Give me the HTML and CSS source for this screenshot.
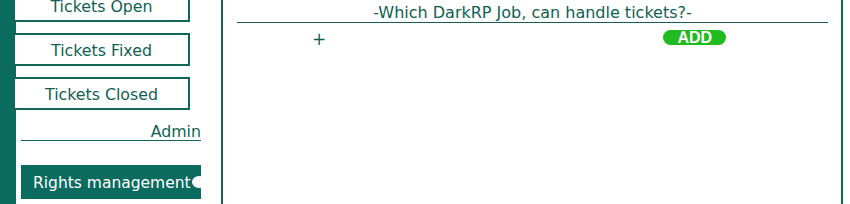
FILE: index.html
```html
<!DOCTYPE html>
<html>
<head>
<meta charset="utf-8">
<link rel="stylesheet" href="styles.css">
</head>
<body>
<div class="frame">
  <aside class="sidebar">
    <div class="nav-btn first">Tickets Open</div>
    <div class="nav-btn">Tickets Fixed</div>
    <div class="nav-btn">Tickets Closed</div>
    <div class="section-label">Admin</div>
    <div class="active-item">Rights management<span class="knob"></span></div>
  </aside>
  <main class="content">
    <div class="heading">-Which DarkRP Job, can handle tickets?-</div>
    <div class="add-row">
      <span class="plus">+</span>
      <span class="add-btn">ADD</span>
    </div>
  </main>
  <div class="edge"></div>
</div>
</body>
</html>
```

FILE: styles.css
```css
html, body {
  margin: 0;
  padding: 0;
  background: #ffffff;
}

.frame {
  display: flex;
  width: 850px;
  height: 204px;
  overflow: hidden;
  font-family: "DejaVu Sans", Verdana, sans-serif;
  color: #0f5f52;
}

.sidebar {
  width: 221px;
  flex: none;
  display: flex;
  flex-direction: column;
  background: linear-gradient(to right, #0b6b5f 16px, #ffffff 16px);
  border-right: 2px solid #0f6659;
}

.nav-btn {
  box-sizing: border-box;
  margin-left: 13px;
  width: 177px;
  height: 33px;
  margin-top: 11px;
  padding-top: 1px;
  background: #ffffff;
  border: 2px solid #0f6659;
  display: flex;
  align-items: center;
  justify-content: center;
  font-size: 15.8px;
  color: #0f5f52;
}

.nav-btn.first {
  margin-top: -11px;
}

.section-label {
  box-sizing: border-box;
  margin-left: 21px;
  width: 180px;
  margin-top: 12px;
  height: 19px;
  padding-top: 1px;
  border-bottom: 1px solid #0f6659;
  text-align: right;
  font-size: 15.8px;
  line-height: 18px;
  color: #0f5f52;
}

.active-item {
  position: relative;
  box-sizing: border-box;
  margin-left: 21px;
  width: 180px;
  margin-top: 24px;
  height: 34px;
  padding-top: 1px;
  background: #0b6b5f;
  color: #ffffff;
  font-size: 15.5px;
  display: flex;
  align-items: center;
  padding-left: 12px;
  overflow: hidden;
}

.knob {
  position: absolute;
  right: -5px;
  top: 11px;
  width: 14px;
  height: 12px;
  border-radius: 50%;
  background: #ffffff;
}

.content {
  width: 618px;
  flex: none;
  display: flex;
  flex-direction: column;
  padding-left: 14px;
  box-sizing: border-box;
}

.heading {
  width: 591px;
  box-sizing: border-box;
  height: 23px;
  border-bottom: 1px solid #1d5c52;
  text-align: center;
  font-size: 16px;
  line-height: 17px;
  padding-top: 4px;
  color: #0f5f52;
}

.add-row {
  display: flex;
  align-items: center;
  margin-top: 7px;
  height: 15px;
}

.plus {
  margin-left: 75px;
  font-size: 17px;
  line-height: 15px;
  padding-top: 4px;
  color: #0f5f52;
}

.add-btn {
  margin-left: 337px;
  width: 63px;
  height: 15px;
  border-radius: 8px;
  background: #1fbb1f;
  color: #ffffff;
  font-family: "Liberation Sans Narrow", "Liberation Sans", Arial, sans-serif;
  font-weight: bold;
  font-size: 16px;
  line-height: 16px;
  text-align: center;
}

.edge {
  width: 2px;
  flex: none;
  background: #0f6659;
}
```
